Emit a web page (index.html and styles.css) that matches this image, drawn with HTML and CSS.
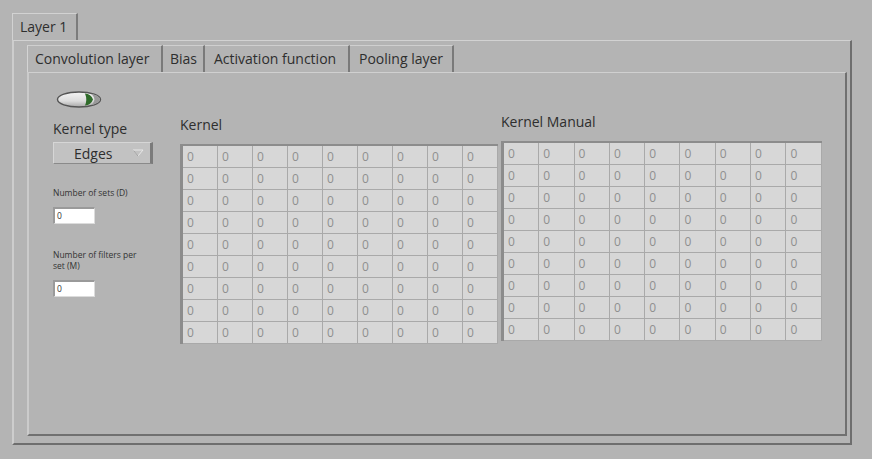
FILE: index.html
```html
<!DOCTYPE html>
<html>
<head>
<meta charset="utf-8">
<link rel="stylesheet" href="styles.css">
</head>
<body>
<div class="app">
  <div class="outer-tabs"><div class="outer-tab">Layer 1</div></div>
  <div class="outer-panel">
    <div class="inner-tabs">
      <div class="tab active t1">Convolution layer</div>
      <div class="tab t2">Bias</div>
      <div class="tab t3">Activation function</div>
      <div class="tab t4">Pooling layer</div>
    </div>
    <div class="inner-panel">
      <div class="controls">
        <svg class="toggle" width="46" height="17" viewBox="0 0 46 17">
          <defs>
            <linearGradient id="tg" x1="0" y1="0" x2="0" y2="1">
              <stop offset="0" stop-color="#f4f4f4"/>
              <stop offset="0.6" stop-color="#dcdcdc"/>
              <stop offset="1" stop-color="#a8a8a8"/>
            </linearGradient>
            <clipPath id="tc"><ellipse cx="23" cy="8.5" rx="21" ry="7"/></clipPath>
          </defs>
          <ellipse cx="23" cy="8.5" rx="21.5" ry="7.5" fill="url(#tg)" stroke="#555" stroke-width="1.4"/>
          <g clip-path="url(#tc)">
            <path d="M31 1 Q37 2 38.5 8.5 Q37 15 31 16 L46 16 L46 1 Z" fill="#9a9a9a"/>
            <path d="M29 2.5 Q35 3 37 8.5 Q35 14 29 14.5 Q31.5 8.5 29 2.5 Z" fill="#2f6b2a"/>
          </g>
        </svg>
        <div class="label big">Kernel type</div>
        <div class="dropdown">
          <span class="dd-text">Edges</span>
          <svg class="dd-arrow" width="12" height="8" viewBox="0 0 12 8"><path d="M1 1 L11 1 L6 7 Z" fill="none" stroke="#e8e8e8" stroke-width="1"/><path d="M1.5 1.5 L6 7" stroke="#8a8a8a" stroke-width="0.8"/></svg>
        </div>
        <div class="label small l1">Number of sets (D)</div>
        <div class="numbox">0</div>
        <div class="label small l2">Number of filters per<br>set (M)</div>
        <div class="numbox">0</div>
      </div>
      <div class="section kernel">
        <div class="label big">Kernel</div>
        <div class="grid g1">
          <span>0</span><span>0</span><span>0</span><span>0</span><span>0</span><span>0</span><span>0</span><span>0</span><span>0</span>
          <span>0</span><span>0</span><span>0</span><span>0</span><span>0</span><span>0</span><span>0</span><span>0</span><span>0</span>
          <span>0</span><span>0</span><span>0</span><span>0</span><span>0</span><span>0</span><span>0</span><span>0</span><span>0</span>
          <span>0</span><span>0</span><span>0</span><span>0</span><span>0</span><span>0</span><span>0</span><span>0</span><span>0</span>
          <span>0</span><span>0</span><span>0</span><span>0</span><span>0</span><span>0</span><span>0</span><span>0</span><span>0</span>
          <span>0</span><span>0</span><span>0</span><span>0</span><span>0</span><span>0</span><span>0</span><span>0</span><span>0</span>
          <span>0</span><span>0</span><span>0</span><span>0</span><span>0</span><span>0</span><span>0</span><span>0</span><span>0</span>
          <span>0</span><span>0</span><span>0</span><span>0</span><span>0</span><span>0</span><span>0</span><span>0</span><span>0</span>
          <span>0</span><span>0</span><span>0</span><span>0</span><span>0</span><span>0</span><span>0</span><span>0</span><span>0</span>
        </div>
      </div>
      <div class="section manual">
        <div class="label big">Kernel Manual</div>
        <div class="grid g2">
          <span>0</span><span>0</span><span>0</span><span>0</span><span>0</span><span>0</span><span>0</span><span>0</span><span>0</span>
          <span>0</span><span>0</span><span>0</span><span>0</span><span>0</span><span>0</span><span>0</span><span>0</span><span>0</span>
          <span>0</span><span>0</span><span>0</span><span>0</span><span>0</span><span>0</span><span>0</span><span>0</span><span>0</span>
          <span>0</span><span>0</span><span>0</span><span>0</span><span>0</span><span>0</span><span>0</span><span>0</span><span>0</span>
          <span>0</span><span>0</span><span>0</span><span>0</span><span>0</span><span>0</span><span>0</span><span>0</span><span>0</span>
          <span>0</span><span>0</span><span>0</span><span>0</span><span>0</span><span>0</span><span>0</span><span>0</span><span>0</span>
          <span>0</span><span>0</span><span>0</span><span>0</span><span>0</span><span>0</span><span>0</span><span>0</span><span>0</span>
          <span>0</span><span>0</span><span>0</span><span>0</span><span>0</span><span>0</span><span>0</span><span>0</span><span>0</span>
          <span>0</span><span>0</span><span>0</span><span>0</span><span>0</span><span>0</span><span>0</span><span>0</span><span>0</span>
        </div>
      </div>
    </div>
  </div>
</div>
</body>
</html>
```
FILE: styles.css
```css
html, body {
  margin: 0;
  padding: 0;
}
body {
  width: 872px;
  height: 459px;
  overflow: hidden;
  background: #b4b4b4;
  font-family: "Open Sans", "Noto Sans", "Liberation Sans", sans-serif;
  color: #2e2e2e;
}
.app {
  padding: 13px 0 0 12px;
}
.outer-tabs {
  display: flex;
  height: 27px;
}
.outer-tab {
  width: 66px;
  box-sizing: border-box;
  border-top: 1px solid #d2d2d2;
  border-left: 1px solid #d2d2d2;
  border-right: 2px solid #7c7c7c;
  padding: 3px 0 0 7px;
  font-size: 14px;
  line-height: 19px;
}
.outer-panel {
  width: 840px;
  height: 405px;
  box-sizing: border-box;
  border-top: 1px solid #d2d2d2;
  border-left: 2px solid #cdcdcd;
  border-right: 2px solid #6e6e6e;
  border-bottom: 2px solid #6e6e6e;
  padding: 4px 3px 0 13px;
}
.inner-tabs {
  display: flex;
  height: 27px;
}
.tab {
  box-sizing: border-box;
  height: 27px;
  border-top: 1px solid #cfcfcf;
  border-right: 2px solid #7a7a7a;
  font-size: 14px;
  line-height: 25px;
  white-space: nowrap;
}
.tab.active {
  border-left: 1px solid #d4d4d4;
}
.t1 { width: 136px; padding-left: 7px; }
.t2 { width: 42px; padding-left: 7px; }
.t3 { width: 145px; padding-left: 9px; }
.t4 { width: 104px; padding-left: 9px; }
.inner-panel {
  width: 820px;
  height: 364px;
  box-sizing: border-box;
  border-top: 1px solid #d0d0d0;
  border-left: 2px solid #cbcbcb;
  border-right: 2px solid #707070;
  border-bottom: 2px solid #707070;
  padding: 18px 0 0 24px;
  display: flex;
  align-items: flex-start;
}
.controls {
  width: 127px;
  display: flex;
  flex-direction: column;
  align-items: flex-start;
}
.toggle {
  display: block;
  margin-left: 3px;
}
.label.big {
  font-size: 14px;
  line-height: 18px;
}
.controls .label.big {
  margin-top: 12px;
}
.label.small {
  font-size: 8.5px;
  line-height: 11px;
  color: #333;
}
.dropdown {
  margin-top: 4px;
  width: 100px;
  height: 22px;
  box-sizing: border-box;
  border-top: 1px solid #d6d6d6;
  border-left: 1px solid #d6d6d6;
  border-right: 3px solid #7b7b7b;
  border-bottom: 1px solid #8a8a8a;
  background: #c2c2c2;
  display: flex;
  align-items: center;
  font-size: 14px;
}
.dd-text {
  margin-left: 20px;
  width: 58px;
}
.dd-arrow {
  display: block;
}
.l1 { margin-top: 23px; }
.l2 { margin-top: 25px; }
.numbox {
  margin-top: 9px;
  width: 42px;
  height: 17px;
  box-sizing: border-box;
  background: #ffffff;
  border-top: 2px solid #9a9a9a;
  border-left: 2px solid #9a9a9a;
  border-right: 1px solid #dcdcdc;
  border-bottom: 1px solid #dcdcdc;
  font-size: 8.5px;
  line-height: 13px;
  padding-left: 2px;
  color: #333;
}
.section {
  display: flex;
  flex-direction: column;
}
.kernel .label {
  margin-top: 25px;
}
.manual {
  margin-left: 3px;
}
.manual .label {
  margin-top: 22px;
}
.grid {
  margin-top: 10px;
  display: grid;
  grid-template-rows: repeat(9, 22px);
  border-top: 2px solid #8c8c8c;
  border-left: 3px solid #8c8c8c;
}
.g1 { grid-template-columns: repeat(9, 35px); }
.g2 { grid-template-columns: repeat(9, 35.3px); }
.grid span {
  box-sizing: border-box;
  background: #d7d7d7;
  border-right: 1px solid #a9a9a9;
  border-bottom: 1px solid #a9a9a9;
  font-size: 12px;
  line-height: 21px;
  padding-left: 4px;
  color: #8f8f8f;
}
```
